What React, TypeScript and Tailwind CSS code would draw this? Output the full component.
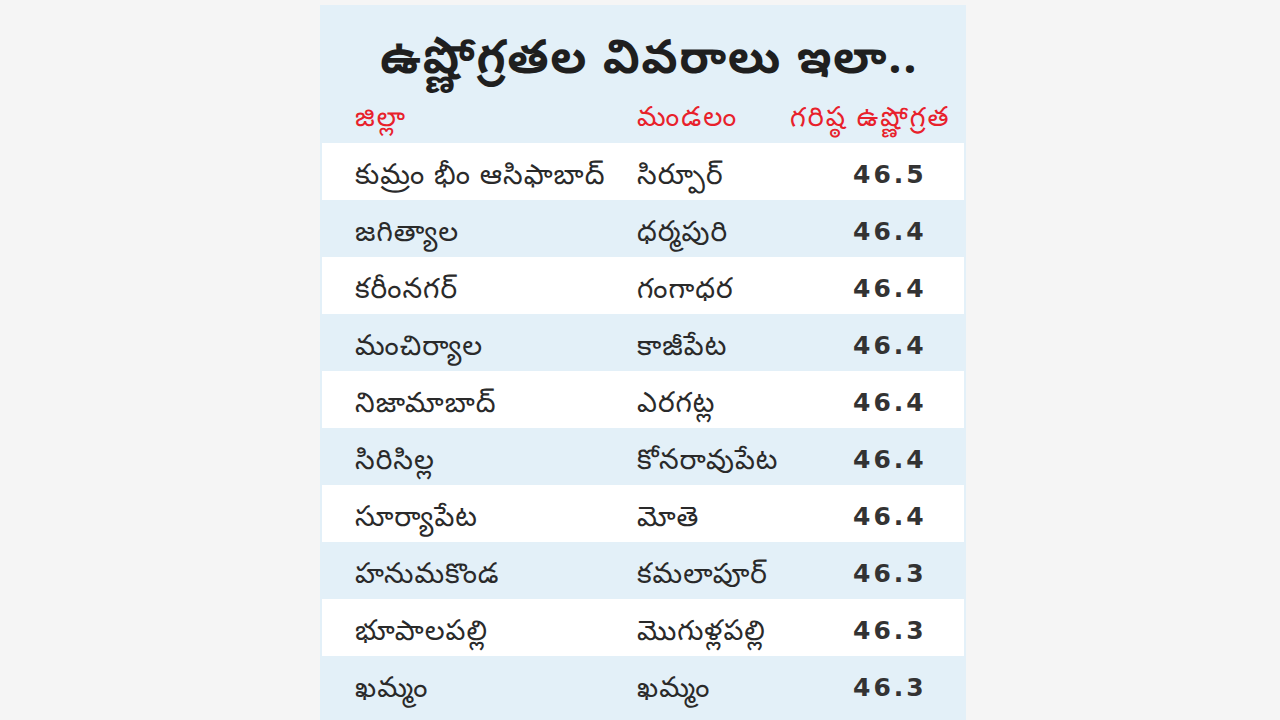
const rows = [
  { district: "కుమ్రం భీం ఆసిఫాబాద్", mandal: "సిర్పూర్", temp: "46.5" },
  { district: "జగిత్యాల", mandal: "ధర్మపురి", temp: "46.4" },
  { district: "కరీంనగర్", mandal: "గంగాధర", temp: "46.4" },
  { district: "మంచిర్యాల", mandal: "కాజీపేట", temp: "46.4" },
  { district: "నిజామాబాద్", mandal: "ఎరగట్ల", temp: "46.4" },
  { district: "సిరిసిల్ల", mandal: "కోనరావుపేట", temp: "46.4" },
  { district: "సూర్యాపేట", mandal: "మోతె", temp: "46.4" },
  { district: "హనుమకొండ", mandal: "కమలాపూర్", temp: "46.3" },
  { district: "భూపాలపల్లి", mandal: "మొగుళ్లపల్లి", temp: "46.3" },
  { district: "ఖమ్మం", mandal: "ఖమ్మం", temp: "46.3" },
];

const telugu = "font-['Noto_Sans_Telugu','Noto_Sans','Lohit_Telugu','Pothana2000',sans-serif]";

export default function App() {
  return (
    <div className="w-full h-[720px] overflow-hidden bg-[#f5f5f5] flex justify-center pl-[6px]">
      <div className={`w-[646px] mt-[5px] bg-[#e3f0f8] px-[2px] ${telugu}`}>
        <div className="h-[94px] flex items-center justify-center pl-[12px] pt-[24px]">
          <h1 className="text-[47px] font-bold text-[#1f1f1f] leading-none tracking-[1.5px]">
            ఉష్ణోగ్రతల వివరాలు ఇలా..
          </h1>
        </div>
        <div className="h-[44px] grid grid-cols-[315px_153px_1fr] items-center text-[27px] text-[#e8212b] tracking-[2px]">
          <div className="pl-[33px]">జిల్లా</div>
          <div>మండలం</div>
          <div className="whitespace-nowrap">గరిష్ఠ ఉష్ణోగ్రత</div>
        </div>
        {rows.map((r, i) => (
          <div
            key={i}
            className={`h-[57px] grid grid-cols-[315px_216px_1fr] items-center text-[28px] tracking-[1px] text-[#2a2a2a] ${
              i % 2 === 0 ? "bg-white" : ""
            }`}
          >
            <div className="pl-[33px] pt-[14px] whitespace-nowrap">{r.district}</div>
            <div className="pt-[14px] whitespace-nowrap">{r.mandal}</div>
            <div className="pt-[6px] font-['DejaVu_Sans',sans-serif] font-bold text-[25px] tracking-[3px] text-[#333]">
              {r.temp}
            </div>
          </div>
        ))}
      </div>
    </div>
  );
}
